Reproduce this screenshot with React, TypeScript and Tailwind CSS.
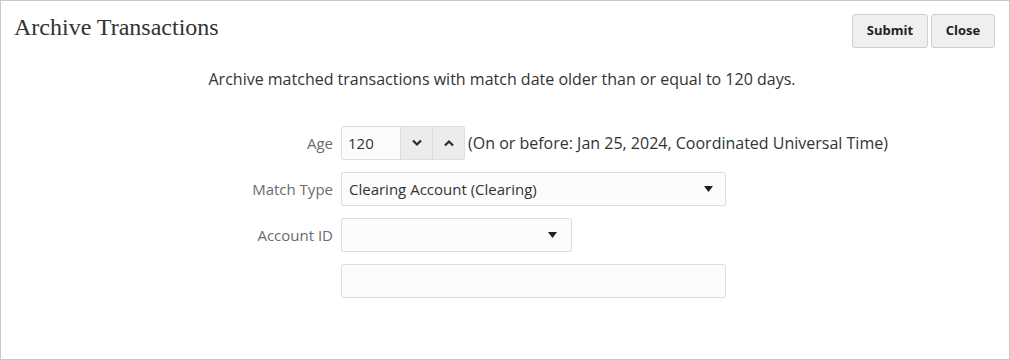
import React from "react";

const Caret = () => (
  <svg width="9" height="6" viewBox="0 0 9 6" className="shrink-0">
    <path d="M0 0 L9 0 L4.5 6 Z" fill="#1f1f1f" />
  </svg>
);

const Chevron = ({ up }: { up?: boolean }) => (
  <svg width="12" height="8" viewBox="0 0 12 8">
    <path
      d={up ? "M2 6.5 L6 2.5 L10 6.5" : "M2 1.5 L6 5.5 L10 1.5"}
      fill="none"
      stroke="#2a2a2a"
      strokeWidth="2.2"
      strokeLinecap="butt"
    />
  </svg>
);

export default function App() {
  return (
    <div
      className="w-[1010px] h-[360px] border border-[#c9c9c9] bg-white text-[#333]"
      style={{ fontFamily: '"Open Sans", "Noto Sans", sans-serif' }}
    >
      <div className="flex justify-between items-start pl-[13px] pr-[14px] pt-[13px]">
        <h1
          className="text-[24px] leading-[26px] text-[#333]"
          style={{ fontFamily: '"Liberation Serif", Georgia, serif' }}
        >
          Archive Transactions
        </h1>
        <div className="flex gap-[3px]">
          <button className="w-[76px] h-[34px] rounded-[3px] border border-[#cfcfcf] bg-[#efefef] text-[13px] font-bold text-[#222]">
            Submit
          </button>
          <button className="w-[64px] h-[34px] rounded-[3px] border border-[#cfcfcf] bg-[#efefef] text-[13px] font-bold text-[#222]">
            Close
          </button>
        </div>
      </div>

      <p className="mt-[20px] text-center text-[16px] leading-[22px] text-[#333] pr-[6px]">
        Archive matched transactions with match date older than or equal to 120 days.
      </p>

      <div className="mt-[36px] flex flex-col gap-[12px] pl-[200px]">
        <div className="flex items-center gap-[8px]">
          <label className="w-[132px] text-right text-[15px] text-[#6b6b6b]">Age</label>
          <div className="flex h-[34px] w-[124px] border border-[#dedede] rounded-[2px] bg-[#fcfcfc]">
            <div className="w-[58px] flex items-center pl-[6px] text-[15px] text-[#333]">120</div>
            <div className="w-[32px] flex items-center justify-center bg-[#ececec] border-l border-[#dedede]">
              <Chevron />
            </div>
            <div className="flex-1 flex items-center justify-center bg-[#ececec] border-l border-[#dedede]">
              <Chevron up />
            </div>
          </div>
          <span className="-ml-[5px] text-[16px] text-[#333]">
            (On or before: Jan 25, 2024, Coordinated Universal Time)
          </span>
        </div>

        <div className="flex items-center gap-[8px]">
          <label className="w-[132px] text-right text-[15px] text-[#6b6b6b]">Match Type</label>
          <div className="flex items-center justify-between h-[34px] w-[385px] border border-[#dedede] rounded-[2px] bg-[#fcfcfc] pl-[7px] pr-[12px]">
            <span className="text-[15px] text-[#333]">Clearing Account (Clearing)</span>
            <Caret />
          </div>
        </div>

        <div className="flex items-center gap-[8px]">
          <label className="w-[132px] text-right text-[15px] text-[#6b6b6b]">Account ID</label>
          <div className="flex items-center justify-end h-[34px] w-[231px] border border-[#dedede] rounded-[2px] bg-[#fcfcfc] pr-[14px]">
            <Caret />
          </div>
        </div>

        <div className="flex items-center gap-[8px]">
          <div className="w-[132px]" />
          <div className="h-[34px] w-[385px] border border-[#dedede] rounded-[2px] bg-[#fcfcfc]" />
        </div>
      </div>
    </div>
  );
}
